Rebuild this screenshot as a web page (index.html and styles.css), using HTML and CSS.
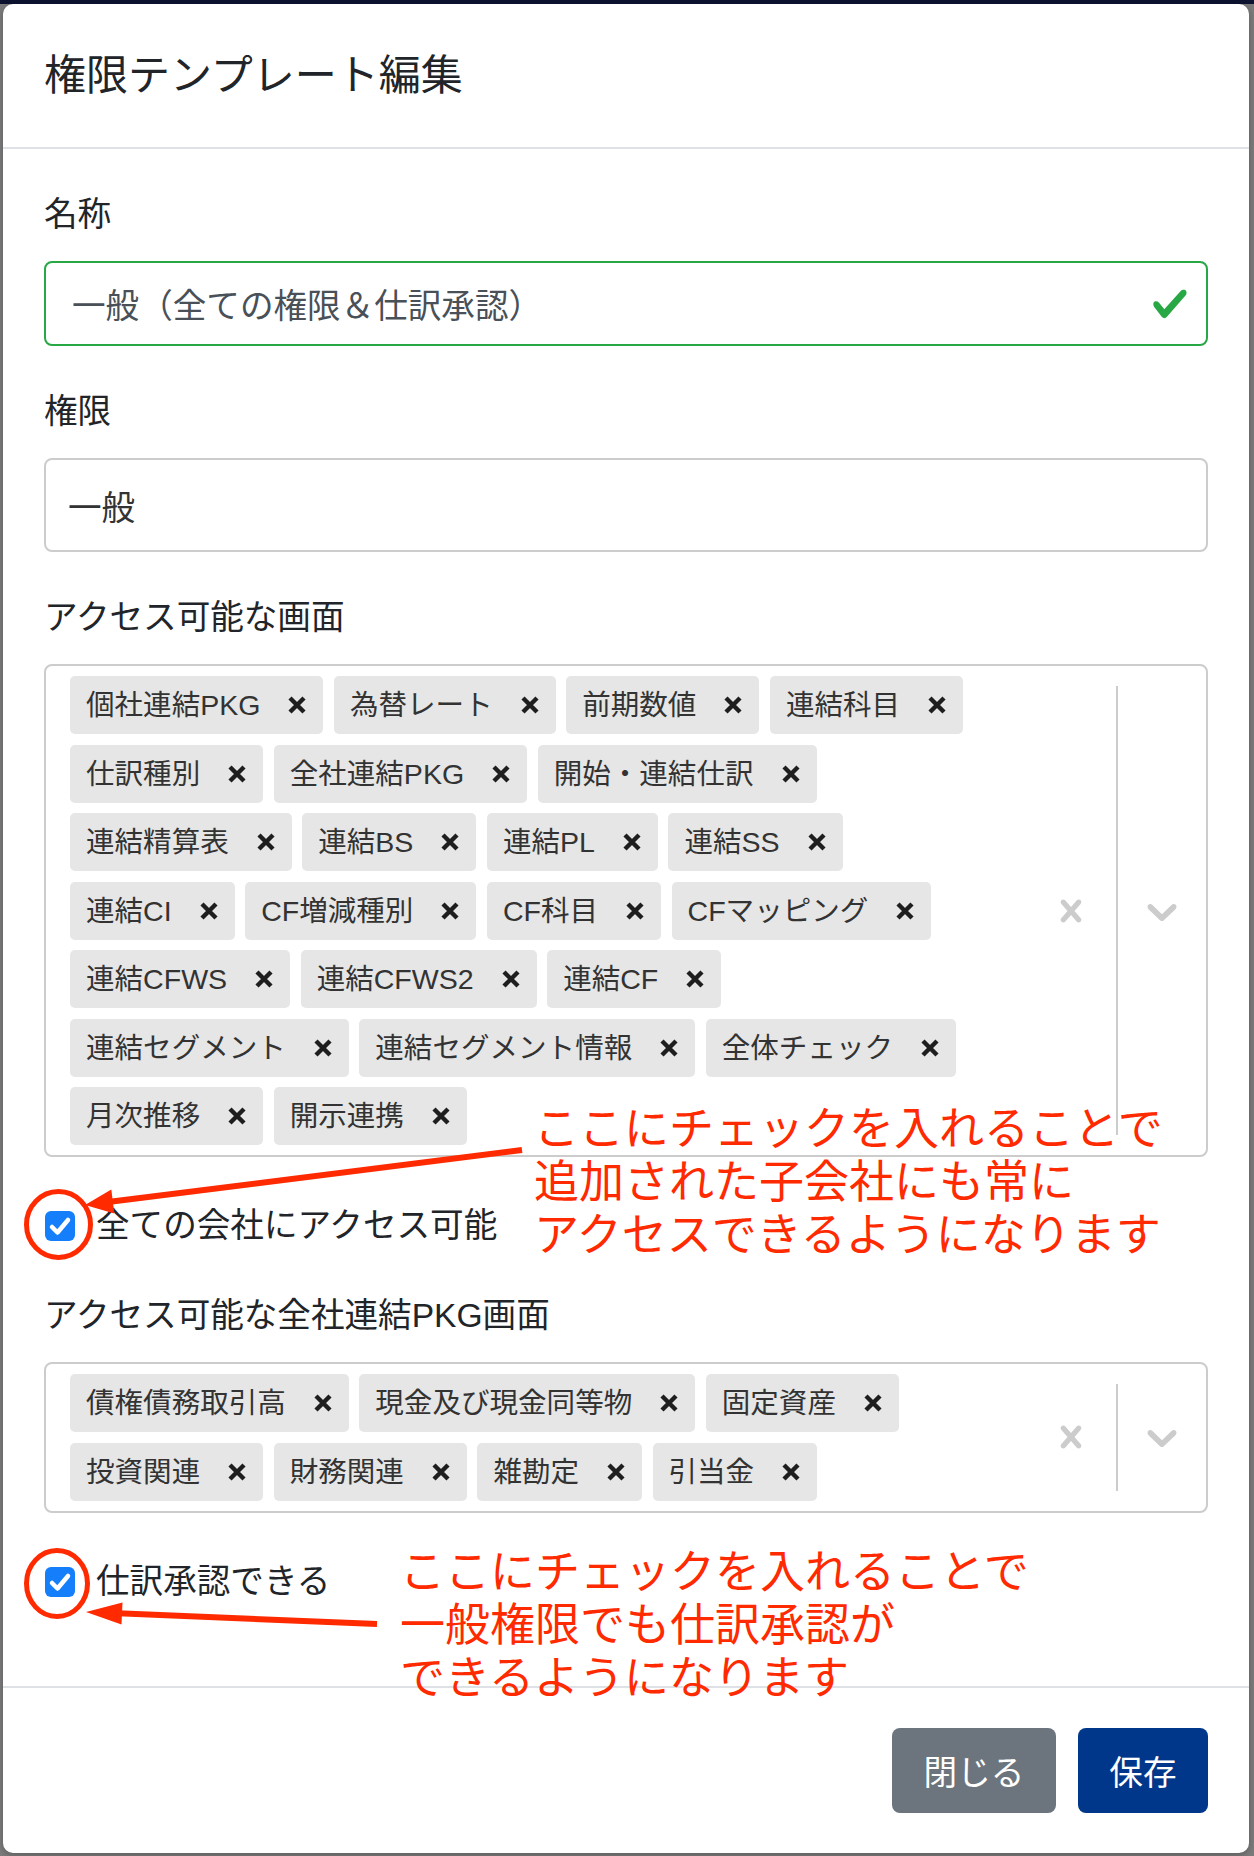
FILE: index.html
```html
<!DOCTYPE html>
<html lang="ja">
<head>
    <meta charset="UTF-8">
    <meta name="viewport" content="width=device-width, initial-scale=1.0">
    <title>権限テンプレート編集</title>
    <link rel="stylesheet" href="styles.css">
</head>
<body>

    <div class="modal">
        <div class="modal-header">
            <h5 class="modal-title">権限テンプレート編集</h5>
        </div>

        <div class="modal-body">
            <div class="form-group">
                <label class="form-label">名称</label>
                <div class="form-control is-valid">
                    <span class="form-value">一般（全ての権限＆仕訳承認）</span>
                    <svg class="valid-icon" viewBox="0 0 8 8"><path d="M2.3 6.73L.6 4.53c-.4-1.04.46-1.4 1.1-.8l1.1 1.4 3.4-3.8c.6-.63 1.6-.27 1.2.7l-4 4.6c-.43.5-.8.4-1.1.1z"/></svg>
                </div>
            </div>

            <div class="form-group">
                <label class="form-label">権限</label>
                <div class="select-single">一般</div>
            </div>

            <div class="form-group">
                <label class="form-label">アクセス可能な画面</label>
                <div class="multi-select">
                    <div class="value-list">
                        <div class="tag"><span class="tag-label">個社連結PKG</span><span class="tag-remove"><svg viewBox="0 0 18 18"><path d="M2 2L16 16M16 2L2 16"/></svg></span></div>
                        <div class="tag"><span class="tag-label">為替レート</span><span class="tag-remove"><svg viewBox="0 0 18 18"><path d="M2 2L16 16M16 2L2 16"/></svg></span></div>
                        <div class="tag"><span class="tag-label">前期数値</span><span class="tag-remove"><svg viewBox="0 0 18 18"><path d="M2 2L16 16M16 2L2 16"/></svg></span></div>
                        <div class="tag"><span class="tag-label">連結科目</span><span class="tag-remove"><svg viewBox="0 0 18 18"><path d="M2 2L16 16M16 2L2 16"/></svg></span></div>
                        <div class="tag"><span class="tag-label">仕訳種別</span><span class="tag-remove"><svg viewBox="0 0 18 18"><path d="M2 2L16 16M16 2L2 16"/></svg></span></div>
                        <div class="tag"><span class="tag-label">全社連結PKG</span><span class="tag-remove"><svg viewBox="0 0 18 18"><path d="M2 2L16 16M16 2L2 16"/></svg></span></div>
                        <div class="tag"><span class="tag-label">開始・連結仕訳</span><span class="tag-remove"><svg viewBox="0 0 18 18"><path d="M2 2L16 16M16 2L2 16"/></svg></span></div>
                        <div class="tag"><span class="tag-label">連結精算表</span><span class="tag-remove"><svg viewBox="0 0 18 18"><path d="M2 2L16 16M16 2L2 16"/></svg></span></div>
                        <div class="tag"><span class="tag-label">連結BS</span><span class="tag-remove"><svg viewBox="0 0 18 18"><path d="M2 2L16 16M16 2L2 16"/></svg></span></div>
                        <div class="tag"><span class="tag-label">連結PL</span><span class="tag-remove"><svg viewBox="0 0 18 18"><path d="M2 2L16 16M16 2L2 16"/></svg></span></div>
                        <div class="tag"><span class="tag-label">連結SS</span><span class="tag-remove"><svg viewBox="0 0 18 18"><path d="M2 2L16 16M16 2L2 16"/></svg></span></div>
                        <div class="tag"><span class="tag-label">連結CI</span><span class="tag-remove"><svg viewBox="0 0 18 18"><path d="M2 2L16 16M16 2L2 16"/></svg></span></div>
                        <div class="tag"><span class="tag-label">CF増減種別</span><span class="tag-remove"><svg viewBox="0 0 18 18"><path d="M2 2L16 16M16 2L2 16"/></svg></span></div>
                        <div class="tag"><span class="tag-label">CF科目</span><span class="tag-remove"><svg viewBox="0 0 18 18"><path d="M2 2L16 16M16 2L2 16"/></svg></span></div>
                        <div class="tag"><span class="tag-label">CFマッピング</span><span class="tag-remove"><svg viewBox="0 0 18 18"><path d="M2 2L16 16M16 2L2 16"/></svg></span></div>
                        <div class="tag"><span class="tag-label">連結CFWS</span><span class="tag-remove"><svg viewBox="0 0 18 18"><path d="M2 2L16 16M16 2L2 16"/></svg></span></div>
                        <div class="tag"><span class="tag-label">連結CFWS2</span><span class="tag-remove"><svg viewBox="0 0 18 18"><path d="M2 2L16 16M16 2L2 16"/></svg></span></div>
                        <div class="tag"><span class="tag-label">連結CF</span><span class="tag-remove"><svg viewBox="0 0 18 18"><path d="M2 2L16 16M16 2L2 16"/></svg></span></div>
                        <div class="tag"><span class="tag-label">連結セグメント</span><span class="tag-remove"><svg viewBox="0 0 18 18"><path d="M2 2L16 16M16 2L2 16"/></svg></span></div>
                        <div class="tag"><span class="tag-label">連結セグメント情報</span><span class="tag-remove"><svg viewBox="0 0 18 18"><path d="M2 2L16 16M16 2L2 16"/></svg></span></div>
                        <div class="tag"><span class="tag-label">全体チェック</span><span class="tag-remove"><svg viewBox="0 0 18 18"><path d="M2 2L16 16M16 2L2 16"/></svg></span></div>
                        <div class="tag"><span class="tag-label">月次推移</span><span class="tag-remove"><svg viewBox="0 0 18 18"><path d="M2 2L16 16M16 2L2 16"/></svg></span></div>
                        <div class="tag"><span class="tag-label">開示連携</span><span class="tag-remove"><svg viewBox="0 0 18 18"><path d="M2 2L16 16M16 2L2 16"/></svg></span></div>
                    </div>
                    <div class="indicators">
                        <span class="clear-indicator"><svg viewBox="0 0 20 20"><path d="M14.348 14.849c-0.469 0.469-1.229 0.469-1.697 0l-2.651-3.030-2.651 3.029c-0.469 0.469-1.229 0.469-1.697 0-0.469-0.469-0.469-1.229 0-1.697l2.758-3.15-2.759-3.152c-0.469-0.469-0.469-1.228 0-1.697s1.228-0.469 1.697 0l2.652 3.031 2.651-3.031c0.469-0.469 1.228-0.469 1.697 0s0.469 1.229 0 1.697l-2.758 3.152 2.758 3.15c0.469 0.469 0.469 1.229 0 1.698z"/></svg></span>
                        <span class="separator"></span>
                        <span class="dropdown-indicator"><svg viewBox="0 0 20 20"><path d="M4.516 7.548c0.436-0.446 1.043-0.481 1.576 0l3.908 3.747 3.908-3.747c0.533-0.481 1.141-0.446 1.574 0 0.436 0.445 0.408 1.197 0 1.615-0.406 0.418-4.695 4.502-4.695 4.502-0.217 0.223-0.502 0.335-0.787 0.335s-0.57-0.112-0.789-0.335c0 0-4.287-4.084-4.695-4.502s-0.436-1.170 0-1.615z"/></svg></span>
                    </div>
                </div>
            </div>

            <label class="check-row">
                <span class="checkbox"><svg viewBox="0 0 30 30"><path d="M7 16l5.5 5.5L23 9"/></svg></span>
                全ての会社にアクセス可能
            </label>

            <div class="form-group group-pkg">
                <label class="form-label">アクセス可能な全社連結PKG画面</label>
                <div class="multi-select">
                    <div class="value-list">
                        <div class="tag"><span class="tag-label">債権債務取引高</span><span class="tag-remove"><svg viewBox="0 0 18 18"><path d="M2 2L16 16M16 2L2 16"/></svg></span></div>
                        <div class="tag"><span class="tag-label">現金及び現金同等物</span><span class="tag-remove"><svg viewBox="0 0 18 18"><path d="M2 2L16 16M16 2L2 16"/></svg></span></div>
                        <div class="tag"><span class="tag-label">固定資産</span><span class="tag-remove"><svg viewBox="0 0 18 18"><path d="M2 2L16 16M16 2L2 16"/></svg></span></div>
                        <div class="tag"><span class="tag-label">投資関連</span><span class="tag-remove"><svg viewBox="0 0 18 18"><path d="M2 2L16 16M16 2L2 16"/></svg></span></div>
                        <div class="tag"><span class="tag-label">財務関連</span><span class="tag-remove"><svg viewBox="0 0 18 18"><path d="M2 2L16 16M16 2L2 16"/></svg></span></div>
                        <div class="tag"><span class="tag-label">雑勘定</span><span class="tag-remove"><svg viewBox="0 0 18 18"><path d="M2 2L16 16M16 2L2 16"/></svg></span></div>
                        <div class="tag"><span class="tag-label">引当金</span><span class="tag-remove"><svg viewBox="0 0 18 18"><path d="M2 2L16 16M16 2L2 16"/></svg></span></div>
                    </div>
                    <div class="indicators">
                        <span class="clear-indicator"><svg viewBox="0 0 20 20"><path d="M14.348 14.849c-0.469 0.469-1.229 0.469-1.697 0l-2.651-3.030-2.651 3.029c-0.469 0.469-1.229 0.469-1.697 0-0.469-0.469-0.469-1.229 0-1.697l2.758-3.15-2.759-3.152c-0.469-0.469-0.469-1.228 0-1.697s1.228-0.469 1.697 0l2.652 3.031 2.651-3.031c0.469-0.469 1.228-0.469 1.697 0s0.469 1.229 0 1.697l-2.758 3.152 2.758 3.150c0.469 0.469 0.469 1.229 0 1.698z"/></svg></span>
                        <span class="separator"></span>
                        <span class="dropdown-indicator"><svg viewBox="0 0 20 20"><path d="M4.516 7.548c0.436-0.446 1.043-0.481 1.576 0l3.908 3.747 3.908-3.747c0.533-0.481 1.141-0.446 1.574 0 0.436 0.445 0.408 1.197 0 1.615-0.406 0.418-4.695 4.502-4.695 4.502-0.217 0.223-0.502 0.335-0.787 0.335s-0.57-0.112-0.789-0.335c0 0-4.287-4.084-4.695-4.502s-0.436-1.170 0-1.615z"/></svg></span>
                    </div>
                </div>
            </div>

            <label class="check-row">
                <span class="checkbox"><svg viewBox="0 0 30 30"><path d="M7 16l5.5 5.5L23 9"/></svg></span>
                仕訳承認できる
            </label>
        </div>

        <div class="modal-footer">
            <button class="btn btn-secondary">閉じる</button>
            <button class="btn btn-primary">保存</button>
        </div>
    </div>

    <!-- red markup drawn over the screenshot -->
    <svg class="markup" viewBox="0 0 1254 1856">
        <ellipse cx="58.5" cy="1224.5" rx="32" ry="33"/>
        <ellipse cx="57" cy="1583.5" rx="30.5" ry="33"/>
        <line x1="522" y1="1150" x2="110" y2="1201.8"/>
        <polygon points="85,1205 114.3,1213.4 111.3,1189.6"/>
        <line x1="377" y1="1624" x2="118" y2="1613.3"/>
        <polygon points="86,1612 122.5,1602.5 121.5,1624.5"/>
    </svg>
    <p class="note note-company">ここにチェックを入れることで<br>追加された子会社にも常に<br>アクセスできるようになります</p>
    <p class="note note-approve">ここにチェックを入れることで<br>一般権限でも仕訳承認が<br>できるようになります</p>

</body>
</html>
```

FILE: styles.css
```css
* {
    box-sizing: border-box;
}

body {
    position: relative;
    margin: 0;
    height: 1856px;
    overflow: hidden;
    font-family: "Liberation Sans", "Noto Sans CJK JP", sans-serif;
    color: #212529;
    background: linear-gradient(#0c1230 0 4px, #7b7b7b 4px);
}

.modal {
    width: 1246px;
    margin: 4px 0 0 3px;
    background: #fff;
    border-radius: 10px;
    box-shadow: 0 2px 6px rgba(0, 0, 0, 0.25);
}

.modal-header {
    padding: 39.5px 41px 40.5px;
    border-bottom: 2px solid #dee2e6;
}

.modal-title {
    margin: 0;
    font-size: 42px;
    line-height: 63px;
    font-weight: 400;
}

.modal-body {
    padding: 41px 41px 79px;
}

.form-group {
    margin-bottom: 41px;
}

.form-label {
    display: block;
    margin-bottom: 21px;
    font-size: 33.6px;
    line-height: 50px;
}

.form-control {
    display: flex;
    align-items: center;
    height: 85px;
    padding: 0 17px 0 26px;
    border: 2px solid #ced4da;
    border-radius: 8px;
    font-size: 33.6px;
    color: #495057;
}

.form-control.is-valid {
    border-color: #28a745;
}

.form-value {
    flex: 1;
}

.valid-icon {
    width: 38px;
    height: 38px;
    fill: #28a745;
}

.select-single {
    display: flex;
    align-items: center;
    height: 94px;
    padding: 0 22px;
    border: 2px solid #ccc;
    border-radius: 8px;
    font-size: 33.6px;
    color: #333;
}

/* multi select (react-select look) */
.multi-select {
    display: flex;
    border: 2px solid #ccc;
    border-radius: 8px;
}

.value-list {
    flex: 1;
    display: flex;
    flex-wrap: wrap;
    gap: 10.5px;
    padding: 10px 30px 10px 24px;
}

.tag {
    display: flex;
    align-items: center;
    height: 58px;
    padding: 0 17px 0 16px;
    background: #e6e6e6;
    border-radius: 5px;
}

.tag-label {
    font-size: 28.56px;
    line-height: 58px;
    color: #333;
    white-space: nowrap;
}

.tag-remove {
    display: flex;
    margin-left: 28px;
    color: #1e1e1e;
}

.tag-remove svg {
    width: 18px;
    height: 18px;
    stroke: currentColor;
    stroke-width: 4.4;
    fill: none;
}

.indicators {
    display: flex;
    align-items: center;
}

.clear-indicator,
.dropdown-indicator {
    display: flex;
    fill: #ccc;
}

.clear-indicator {
    padding: 0 23px;
}

.clear-indicator svg {
    width: 44px;
    height: 44px;
}

.separator {
    align-self: stretch;
    width: 2px;
    margin: 20px 0;
    background: #ccc;
}

.dropdown-indicator {
    padding: 0 19px;
}

.dropdown-indicator svg {
    width: 50px;
    height: 50px;
}

.check-row {
    display: flex;
    align-items: center;
    gap: 21px;
    margin-top: 44px;
    font-size: 33.6px;
    line-height: 50px;
}

.checkbox {
    display: flex;
    width: 30px;
    height: 30px;
    margin-left: 1px;
    background: #157efb;
    border-radius: 6px;
}

.checkbox svg {
    width: 30px;
    height: 30px;
    fill: none;
    stroke: #fff;
    stroke-width: 4.5;
    stroke-linecap: round;
    stroke-linejoin: round;
}

.group-pkg {
    margin-top: 40px;
    margin-bottom: 0;
}

.modal-footer {
    display: flex;
    justify-content: flex-end;
    gap: 22px;
    padding: 40px 41px;
    border-top: 2px solid #dee2e6;
}

.btn {
    height: 85px;
    padding: 0 31.5px;
    border: none;
    border-radius: 8px;
    font-family: inherit;
    font-size: 33.6px;
    color: #fff;
}

.btn-secondary {
    background: #6c757d;
}

.btn-primary {
    background: #00378a;
}

/* annotation overlay */
.markup {
    position: absolute;
    top: 0;
    left: 0;
    width: 1254px;
    height: 1856px;
    pointer-events: none;
    fill: none;
    stroke: #ff2a00;
    stroke-width: 5;
}

.markup line {
    stroke-width: 6;
}

.markup polygon {
    fill: #ff2a00;
    stroke: none;
}

.note {
    position: absolute;
    margin: 0;
    font-family: "Noto Sans CJK JP", sans-serif;
    font-size: 45px;
    line-height: 53px;
    color: #ff2a00;
    white-space: nowrap;
}

.note-company {
    left: 534px;
    top: 1099px;
}

.note-approve {
    left: 400px;
    top: 1542px;
}
```
